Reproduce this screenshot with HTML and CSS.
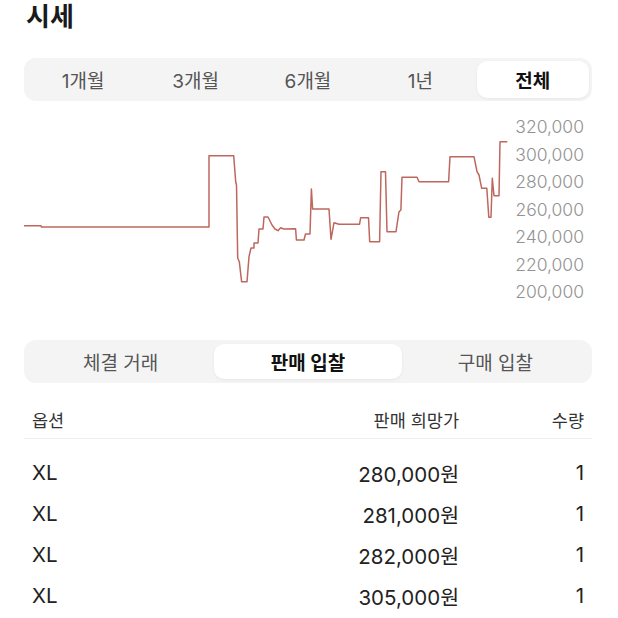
FILE: index.html
```html
<!DOCTYPE html>
<html lang="ko">
<head>
    <meta charset="UTF-8">
    <meta name="viewport" content="width=device-width, initial-scale=1.0">
    <title>시세</title>
    <link rel="stylesheet" href="styles.css">
</head>
<body>
    <div class="page">
        <h1 class="title">시세</h1>

        <div class="segment period">
            <div class="segment-item">1개월</div>
            <div class="segment-item">3개월</div>
            <div class="segment-item">6개월</div>
            <div class="segment-item">1년</div>
            <div class="segment-item active">전체</div>
        </div>

        <div class="chart">
            <svg class="chart-line" width="490" height="193" viewBox="24 113 490 193">
                <polyline fill="none" stroke="#bd675f" stroke-width="1.5" stroke-linejoin="round"
                    points="24,225.7 41,225.7 41.4,227 209,227 209,155.7 233.7,155.7 235.7,181.7 236.5,185 237.7,258 239.3,261.7 241.6,281.7 247,281.7 249,256.7 251,248 254,248 254,243 258,243 259,229 263,229 264,217 268,217 272,225 275,229 278,230.7 280.6,227.7 283.8,229 295.6,228.7 296.4,240 304,240 305.5,234 310,234 311.4,189 312.6,209 329,209 331,239.3 334,222.7 339,224.3 359.5,224.3 360.7,217.7 368.5,217.7 369.7,241.7 379.6,241.7 381,171.7 385.5,171.7 387,231.7 396,231.7 399,211.7 400.9,210 402,177.3 417,177.3 419,181.7 448.6,181.7 450,156.7 474,156.7 477,171.7 479,175 481.7,188.3 486.8,188.3 488.8,217.3 491,217.3 492.3,178.3 494,195.7 499,195.7 500,141.7 507.3,141.7"/>
            </svg>
            <div class="axis">
                <span>320,000</span>
                <span>300,000</span>
                <span>280,000</span>
                <span>260,000</span>
                <span>240,000</span>
                <span>220,000</span>
                <span>200,000</span>
            </div>
        </div>

        <div class="segment tabs">
            <div class="segment-item">체결 거래</div>
            <div class="segment-item active">판매 입찰</div>
            <div class="segment-item">구매 입찰</div>
        </div>

        <div class="table">
            <div class="table-row table-head">
                <span>옵션</span>
                <span class="num">판매 희망가</span>
                <span class="num">수량</span>
            </div>
            <div class="table-body">
                <div class="table-row">
                    <span>XL</span>
                    <span class="num">280,000원</span>
                    <span class="num">1</span>
                </div>
                <div class="table-row">
                    <span>XL</span>
                    <span class="num">281,000원</span>
                    <span class="num">1</span>
                </div>
                <div class="table-row">
                    <span>XL</span>
                    <span class="num">282,000원</span>
                    <span class="num">1</span>
                </div>
                <div class="table-row">
                    <span>XL</span>
                    <span class="num">305,000원</span>
                    <span class="num">1</span>
                </div>
            </div>
        </div>
    </div>
</body>
</html>
```

FILE: styles.css
```css
:root {
    --seg-bg: #f4f4f4;
    --text-main: #1a1a1a;
    --text-sub: #555555;
    --axis-color: #929292;
    --line-color: #ededed;
}

body {
    margin: 0;
    padding: 0;
    background: #ffffff;
    color: var(--text-main);
    font-family: Inter, "Noto Sans CJK KR", sans-serif;
}

.page {
    padding: 0 26px 0 24px;
}

.title {
    margin: 0;
    padding-left: 2px;
    font-size: 26px;
    font-weight: 700;
    line-height: 34px;
    height: 34px;
}

.segment {
    display: grid;
    background: var(--seg-bg);
    border-radius: 12px;
    padding: 3px;
    height: 43px;
    box-sizing: border-box;
}

.period {
    grid-template-columns: repeat(5, 1fr);
    margin-top: 24px;
}

.tabs {
    grid-template-columns: repeat(3, 1fr);
    margin-top: 34px;
    padding: 4px 3px;
}

.segment-item {
    display: flex;
    align-items: center;
    justify-content: center;
    font-size: 19px;
    color: var(--text-sub);
    border-radius: 10px;
}

.segment-item.active {
    background: #ffffff;
    color: #111111;
    font-weight: 700;
    box-shadow: 0 1px 3px rgba(0, 0, 0, 0.06);
}

.chart {
    display: flex;
    height: 193px;
    margin-top: 12px;
}

.chart-line {
    display: block;
    flex-shrink: 0;
}

.axis {
    flex: 1;
    display: flex;
    flex-direction: column;
    align-items: flex-end;
    padding-right: 8px;
}

.axis span {
    height: 27.5px;
    line-height: 27.5px;
    font-size: 17.5px;
    color: var(--axis-color);
    font-weight: 300;
}

.table {
    margin-top: 17px;
}

.table-row {
    display: grid;
    grid-template-columns: 1fr 200px 125px;
    align-items: center;
    padding: 0 8px;
    height: 41px;
    font-size: 20.5px;
    color: #222222;
}

.table-head {
    height: 38px;
    font-size: 17.5px;
    color: #333333;
    border-bottom: 1px solid var(--line-color);
}

.table-body {
    padding-top: 13px;
}

.num {
    text-align: right;
}
```
